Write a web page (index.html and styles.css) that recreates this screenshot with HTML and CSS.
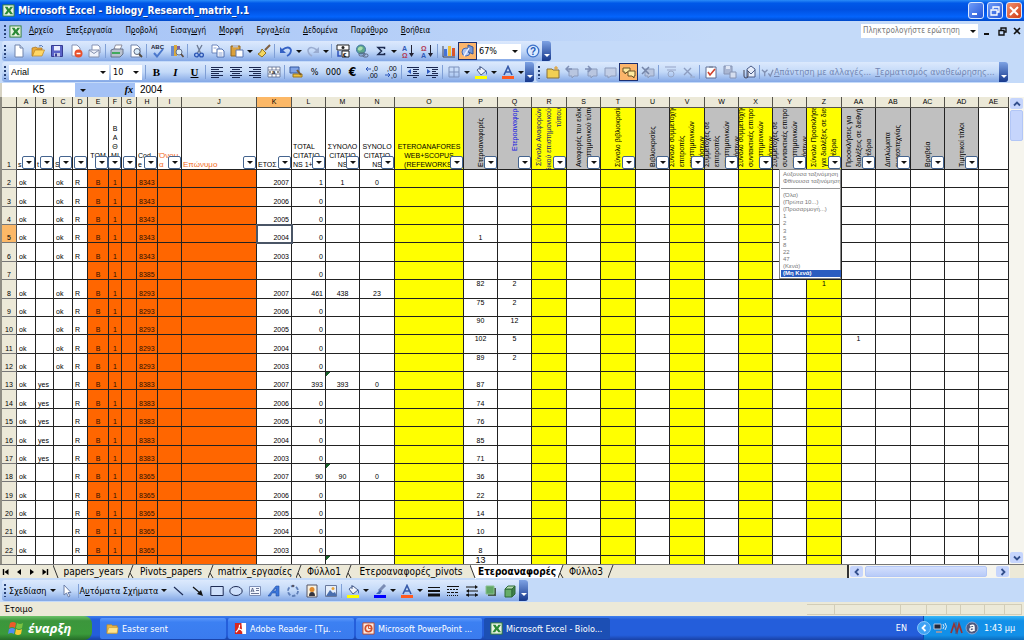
FILE: index.html
```html
<!DOCTYPE html>
<html lang="el">
<head>
<meta charset="utf-8">
<title>Microsoft Excel - Biology_Research_matrix_I.1</title>
<link rel="stylesheet" href="styles.css">
</head>
<body>
<svg class="sprite" aria-hidden="true">
  <symbol id="excel" viewBox="0 0 14 14"><rect x="1" y="1" width="12" height="12" fill="#e8f3e2" stroke="#2c7a34"/><path d="M3 3h3l1.500 2.500L9 3h3L9 7l3 4H9L7.200 8.500 5.500 11H2.500l3-4z" fill="#2b8a36"/></symbol>
  <symbol id="new" viewBox="0 0 14 14"><path d="M3 1h5l3 3v9H3z" fill="#fff" stroke="#7084ac"/><path d="M8 1v3h3" fill="#d4def0" stroke="#7084ac"/></symbol>
  <symbol id="open" viewBox="0 0 14 14"><path d="M1 4l4-1 1 1h5v2H5l-3 6H1z" fill="#e9a93a" stroke="#a8731d" stroke-width=".7"/><path d="M4 6h9.500L11 12H1.500z" fill="#ffd766" stroke="#b98522" stroke-width=".7"/><path d="M8 2q3-1.500 4 1" fill="none" stroke="#4a6fae"/></symbol>
  <symbol id="folderopen" viewBox="0 0 14 14"><path d="M1 3h5l1 1h5v8H1z" fill="#e9b648" stroke="#b98522" stroke-width=".7"/><path d="M3 6h10l-1 6H1z" fill="#ffe48c" stroke="#c79a35" stroke-width=".7"/></symbol>
  <symbol id="save" viewBox="0 0 14 14"><path d="M1.500 1.500h11v11h-11z" fill="#5a63c8" stroke="#363c94"/><path d="M4 2h6v4.500H4z" fill="#e9ecff"/><path d="M4 9h6v3.500H4z" fill="#c5cbe8"/><path d="M5 9.500h2v3H5z" fill="#363c94"/></symbol>
  <symbol id="perm" viewBox="0 0 14 14"><path d="M3 1h5l3 3v8H3z" fill="#fff" stroke="#8593b5"/><circle cx="9.500" cy="9.500" r="4" fill="#e8502c"/><path d="M7.500 9.500h4" stroke="#fff" stroke-width="1.500"/></symbol>
  <symbol id="mail" viewBox="0 0 14 14"><path d="M4 1h6l2 2v6H4z" fill="#fff" stroke="#8793b4"/><path d="M1 6h10v7H1z" fill="#eef1fa" stroke="#8490ae"/><path d="M1 6l5 3.500L11 6" fill="none" stroke="#8490ae"/></symbol>
  <symbol id="print" viewBox="0 0 14 14"><path d="M4 5l1.500-4H12l-2 5z" fill="#fff" stroke="#778" stroke-width=".8"/><path d="M1 6l3-1h9v5l-3 3H1z" fill="#b9c2cf" stroke="#566179" stroke-width=".8"/><path d="M2 8h8v2H2z" fill="#41a95c"/></symbol>
  <symbol id="preview" viewBox="0 0 14 14"><path d="M2 1h6l3 3v9H2z" fill="#fff" stroke="#7084ac"/><circle cx="8" cy="7.500" r="3" fill="#d9ecfb" stroke="#5c6880"/><path d="M10 10l3 3" stroke="#54493c" stroke-width="1.800"/></symbol>
  <symbol id="spell" viewBox="0 0 14 14"><text x="0" y="5" font-size="6" font-weight="bold" fill="#223">ABC</text><path d="M3 9l3 3.500L12 5" fill="none" stroke="#4b78cc" stroke-width="2"/></symbol>
  <symbol id="research" viewBox="0 0 14 14"><path d="M1 2h3v10H1z" fill="#6a8ad0"/><path d="M4 1h3v11H4z" fill="#d9a93d"/><path d="M7 2h3v7H7z" fill="#7d61a8"/><circle cx="9" cy="8" r="3" fill="#dcecfb" stroke="#65728c"/><path d="M11 10l2.500 3" stroke="#5c4a3a" stroke-width="1.600"/></symbol>
  <symbol id="cut" viewBox="0 0 14 14"><path d="M5 1l3.500 8M10 1L5.500 9" stroke="#6c7a94" stroke-width="1.300"/><circle cx="4.500" cy="11" r="1.900" fill="none" stroke="#2b55b4" stroke-width="1.300"/><circle cx="9.500" cy="11" r="1.900" fill="none" stroke="#2b55b4" stroke-width="1.300"/></symbol>
  <symbol id="copy" viewBox="0 0 14 14"><path d="M1 1h5l2 2v6H1z" fill="#fff" stroke="#6c86bd"/><path d="M6 5h5l2 2v6H6z" fill="#fff" stroke="#5070b0"/><path d="M7.500 9h4M7.500 11h4M2.500 4h3" stroke="#8aa3d6"/></symbol>
  <symbol id="paste" viewBox="0 0 14 14"><path d="M1 2h9v10H1z" fill="#dba13b" stroke="#8f6620"/><path d="M3 1h5v2.500H3z" fill="#b9bdc8"/><path d="M6 6h7v7H6z" fill="#fff" stroke="#5d78b4"/></symbol>
  <symbol id="brush" viewBox="0 0 14 14"><path d="M13 1L8 6" stroke="#806040" stroke-width="2"/><path d="M5 5l4 4-4 4-4-3q3-1 4-5z" fill="#f5d75f" stroke="#94731f"/></symbol>
  <symbol id="undo" viewBox="0 0 14 14"><path d="M3 6q7-5 9 0 0 4-4 6" fill="none" stroke="#3461c4" stroke-width="1.800"/><path d="M1 3v6h6z" fill="#3461c4"/></symbol>
  <symbol id="redo" viewBox="0 0 14 14"><path d="M11 6Q4 1 2 6q0 4 4 6" fill="none" stroke="#9aacd0" stroke-width="1.600"/><path d="M13 3v6H7z" fill="#9aacd0"/></symbol>
  <symbol id="euroconv" viewBox="0 0 14 14"><path d="M1 1h12v5H1z" fill="#fff" stroke="#222"/><circle cx="7" cy="3.500" r="1.500" fill="#222"/><path d="M6 7h7v6H6z" fill="#fff" stroke="#222"/><text x="7" y="12.500" font-size="6" font-weight="bold">€</text><path d="M2 7v5h3" fill="none" stroke="#2c50ba" stroke-width="1.500"/></symbol>
  <symbol id="link" viewBox="0 0 14 14"><circle cx="6" cy="5.500" r="4.500" fill="#5ea68d" stroke="#3f73a5"/><path d="M3 4q3-3 5 0-2 4-5 2z" fill="#a6dfad"/><rect x="4" y="9" width="6" height="3" rx="1.500" fill="none" stroke="#55637e"/><rect x="8" y="10" width="5" height="3" rx="1.500" fill="none" stroke="#55637e"/></symbol>
  <symbol id="sigma" viewBox="0 0 14 14"><path d="M10.500 5V3.500H4L7.500 7 4 10.500h6.500V9" fill="none" stroke="#1d2b4f" stroke-width="1.500"/></symbol>
  <symbol id="sorta" viewBox="0 0 14 14"><text x="1" y="6.500" font-size="7" font-weight="bold" fill="#3159b8">A</text><text x="1" y="13.500" font-size="7" font-weight="bold" fill="#b43b54">Ω</text><path d="M10.500 1v10" stroke="#223"/><path d="M8 9h5l-2.500 4z" fill="#223"/></symbol>
  <symbol id="sortd" viewBox="0 0 14 14"><text x="1" y="6.500" font-size="7" font-weight="bold" fill="#b43b54">Ω</text><text x="1" y="13.500" font-size="7" font-weight="bold" fill="#3159b8">A</text><path d="M10.500 1v10" stroke="#223"/><path d="M8 9h5l-2.500 4z" fill="#223"/></symbol>
  <symbol id="chart" viewBox="0 0 14 14"><path d="M1 2v11h12" fill="none" stroke="#445"/><path d="M2 5h3v7H2z" fill="#4672d4"/><path d="M6 2h3v10H6z" fill="#f0c237"/><path d="M10 4h3v8h-3z" fill="#d9552c"/></symbol>
  <symbol id="shapes" viewBox="0 0 14 14"><circle cx="5" cy="8" r="4" fill="#aac4f2" stroke="#4468b0"/><path d="M7 1l5 2v7l-5-2z" fill="#7596d6" stroke="#35589f"/><path d="M3 12L8 4" stroke="#eef" stroke-width="1.500"/></symbol>
  <symbol id="help" viewBox="0 0 14 14"><circle cx="7" cy="7" r="5.800" fill="#dcebff" stroke="#3d71c9" stroke-width="1.300"/><text x="4" y="10.500" font-size="10" font-weight="bold" fill="#2458b8">?</text></symbol>
  <symbol id="left" viewBox="0 0 14 14"><path d="M1 2.500h12M1 4.500h8M1 6.500h12M1 8.500h8M1 10.500h12M1 12.500h8" stroke="#1b2850"/></symbol>
  <symbol id="center" viewBox="0 0 14 14"><path d="M1 2.500h12M3 4.500h8M1 6.500h12M3 8.500h8M1 10.500h12M3 12.500h8" stroke="#1b2850"/></symbol>
  <symbol id="right" viewBox="0 0 14 14"><path d="M1 2.500h12M5 4.500h8M1 6.500h12M5 8.500h8M1 10.500h12M5 12.500h8" stroke="#1b2850"/></symbol>
  <symbol id="merge" viewBox="0 0 14 14"><path d="M1 2h12v10H1zM1 5h12M1 9h12M5 2v3M9 2v3M5 9v3M9 9v3" fill="#fff" stroke="#5a6a8e" stroke-width=".8"/><text x="5" y="9" font-size="6" font-weight="bold" fill="#222">a</text><path d="M2 7h2M10 7h2" stroke="#222"/></symbol>
  <symbol id="money" viewBox="0 0 14 14"><path d="M1 2h9v6H1z" fill="#7fa3e6" stroke="#35589f"/><path d="M4 9h9v3H4z" fill="#efc23c" stroke="#9a7420"/><path d="M8 5l4 5" stroke="#7a5a2b" stroke-width="2"/></symbol>
  <symbol id="decinc" viewBox="0 0 14 14"><text x="7" y="6" font-size="7">,0</text><text x="3" y="13" font-size="7">,00</text><path d="M1 4h5M3 2L1 4l2 2" fill="none" stroke="#2c56ba"/></symbol>
  <symbol id="decdec" viewBox="0 0 14 14"><text x="3" y="6" font-size="7">,00</text><text x="7" y="13" font-size="7">,0</text><path d="M1 10h5M4 8l2 2-2 2" fill="none" stroke="#2c56ba"/></symbol>
  <symbol id="outdent" viewBox="0 0 14 14"><path d="M1 2.500h12M7 4.500h6M7 6.500h4M7 8.500h6M1 10.500h12M7 12.500h4" stroke="#1b2850"/><path d="M5 4v5L1.500 6.500z" fill="#2f5ac0"/></symbol>
  <symbol id="indent" viewBox="0 0 14 14"><path d="M1 2.500h12M7 4.500h6M7 6.500h4M7 8.500h6M1 10.500h12M7 12.500h4" stroke="#1b2850"/><path d="M2 4v5l3.500-2.500z" fill="#2f5ac0"/></symbol>
  <symbol id="borders" viewBox="0 0 14 14"><path d="M2 2h10v10H2zM7 2v10M2 7h10" fill="none" stroke="#7d92bd"/></symbol>
  <symbol id="fill" viewBox="0 0 14 14"><path d="M3 5l4-3 5 4-5 4z" fill="#eef3fc" stroke="#4a5f8c"/><path d="M6 5V1" stroke="#4a5f8c"/><path d="M12 5q2 3 0 5z" fill="#3a63b8"/><path d="M1 11h12v3H1z" fill="#ff0"/></symbol>
  <symbol id="linecolor" viewBox="0 0 14 14"><path d="M12 1L6 7" stroke="#7a8cb4" stroke-width="3"/><path d="M7 6L3 10h4l2-3z" fill="#3f66b6"/><path d="M1 11h12v3H1z" fill="#00f"/></symbol>
  <symbol id="fontcolor" viewBox="0 0 14 14"><path d="M3 10L7 1.500 11 10M4.500 7h5" fill="none" stroke="#3559a8" stroke-width="1.600"/><path d="M1 11h12v3H1z" fill="#ff5a1f"/></symbol>
  <symbol id="folder" viewBox="0 0 14 14"><path d="M1 4h5l1 1h6v8H1z" fill="#f1cf52" stroke="#86703a"/><path d="M10 1v4M8 3h4" stroke="#e49b1d"/></symbol>
  <symbol id="noteprev" viewBox="0 0 14 14"><path d="M4 4h9v7H9l-2 2v-2H4z" fill="#b9c6e0" stroke="#8c9cbd"/><path d="M1 4h6M4 1L1 4l3 3" fill="none" stroke="#7f90b6" stroke-width="1.500"/></symbol>
  <symbol id="notenext" viewBox="0 0 14 14"><path d="M4 4h9v7H9l-2 2v-2H4z" fill="#b9c6e0" stroke="#8c9cbd"/><path d="M1 4h6M4 1l3 3-3 3" fill="none" stroke="#7f90b6" stroke-width="1.500"/></symbol>
  <symbol id="note" viewBox="0 0 14 14"><path d="M2 3h11v8H8l-3 2v-2H2z" fill="#c2cee6" stroke="#8c9cbd"/></symbol>
  <symbol id="notes" viewBox="0 0 14 14"><path d="M1 3h7v4H5L3 9V7H1z" fill="#ffeaa0" stroke="#6a5428"/><path d="M6 6h7v5h-1v2l-2-2H6z" fill="#ffeaa0" stroke="#6a5428"/></symbol>
  <symbol id="notedel" viewBox="0 0 14 14"><path d="M4 4h9v7H9l-2 2v-2H4z" fill="#b9c6e0" stroke="#8c9cbd"/><path d="M1 2l7 7M8 2L1 9" stroke="#7585a8" stroke-width="1.500"/></symbol>
  <symbol id="inkoff" viewBox="0 0 14 14"><path d="M2 2h11M4 5h9" stroke="#a9b8d8" stroke-width="1.500"/><circle cx="8" cy="9" r="3" fill="none" stroke="#98a7c6"/></symbol>
  <symbol id="inkdel" viewBox="0 0 14 14"><path d="M2 3l8 8M9 3l-7 7" stroke="#8d9dc0" stroke-width="1.400"/><path d="M8 12h5" stroke="#98a7c6"/></symbol>
  <symbol id="task" viewBox="0 0 14 14"><path d="M2 2h10v11H2z" fill="#fff" stroke="#5f6f94"/><path d="M5 1h4v2H5z" fill="#8893ab"/><path d="M4 7l2 3 5-6" fill="none" stroke="#d0402c" stroke-width="1.600"/></symbol>
  <symbol id="savegrey" viewBox="0 0 14 14"><path d="M1 1h8v8H1z" fill="#a9b6d2" stroke="#8694b4"/><path d="M3 1h4v3H3z" fill="#dfe6f5"/><path d="M7 7h6v6H7z" fill="#d5deef" stroke="#8694b4"/></symbol>
  <symbol id="attach" viewBox="0 0 14 14"><path d="M5 4l4-3 4 3v8H5z" fill="#e5ecfa" stroke="#4a5c88"/><path d="M5 5l4 4 4-4" fill="none" stroke="#4a5c88"/><path d="M2 5v6q0 2 2 2t2-2V6" fill="none" stroke="#445"/></symbol>
  <symbol id="reply" viewBox="0 0 14 14"><path d="M1 4l3 3 3-3M4 7v4M8 8l2 3 3-7" fill="none" stroke="#8291b4" stroke-width="1.400"/></symbol>
  <symbol id="pointer" viewBox="0 0 14 14"><path d="M4 1v10l2.500-2 2 4 1.500-1-2-3.500h3z" fill="#fff" stroke="#6b7ea8"/></symbol>
  <symbol id="line" viewBox="0 0 14 14"><path d="M2 3l9 8" stroke="#1d2b55" stroke-width="1.200"/></symbol>
  <symbol id="arrow" viewBox="0 0 14 14"><path d="M2 3l7 6" stroke="#111" stroke-width="1.200"/><path d="M12 12l-6-2 4-4z" fill="#111"/></symbol>
  <symbol id="rect" viewBox="0 0 14 14"><path d="M.8 2.500h12.400v9H.8z" fill="#cfe0fb" stroke="#1d2b55"/></symbol>
  <symbol id="oval" viewBox="0 0 14 14"><ellipse cx="7" cy="7" rx="6.200" ry="4.500" fill="#cfe0fb" stroke="#1d2b55"/></symbol>
  <symbol id="textbox" viewBox="0 0 14 14"><path d="M1.500 2.500h11v9h-11z" fill="#f2f6ff" stroke="#7c8fb8"/><path d="M3 8l1.500-4L6 8M3.500 7h2M8 4.500h3M8 6.500h3M3 9.500h8" fill="none" stroke="#48557a" stroke-width=".8"/></symbol>
  <symbol id="wordart" viewBox="0 0 14 14"><path d="M1 12L9 2h3v10H9V9H5l-1.500 3zM6.500 7H9V4z" fill="#3b76dc" stroke="#2450a4" stroke-width=".6"/></symbol>
  <symbol id="diagram" viewBox="0 0 14 14"><circle cx="7" cy="7" r="5" fill="none" stroke="#5f7fb8" stroke-width="1.800" stroke-dasharray="3.500 1.700"/><circle cx="7" cy="2" r="1.300" fill="#556"/></symbol>
  <symbol id="clipart" viewBox="0 0 14 14"><path d="M2 1h10v12H2z" fill="#f7f0e0" stroke="#556"/><circle cx="7" cy="5.500" r="2.500" fill="#e08a2c"/><path d="M4 12q0-4 3-4t3 4z" fill="#34343f"/></symbol>
  <symbol id="picture" viewBox="0 0 14 14"><path d="M1.500 1.500h11v11h-11z" fill="#e5eefb" stroke="#68789c"/><circle cx="9" cy="4.500" r="1.500" fill="#e6a33b"/><path d="M2 12l4-6 3 3 2-1 2 4z" fill="#4b6fae"/></symbol>
  <symbol id="weight" viewBox="0 0 14 14"><path d="M1 3.500h12" stroke="#111"/><path d="M1 7h12" stroke="#111" stroke-width="2"/><path d="M1 11h12" stroke="#111" stroke-width="3"/></symbol>
  <symbol id="dash" viewBox="0 0 14 14"><path d="M1 2.500h12" stroke="#111"/><path d="M1 5.500h12" stroke="#111" stroke-dasharray="2 1"/><path d="M1 8.500h12" stroke="#111" stroke-dasharray="3 1"/><path d="M1 11.500h12" stroke="#111" stroke-dasharray="1 1"/></symbol>
  <symbol id="arrows" viewBox="0 0 14 14"><path d="M1 3h10M3 7h10M1 11h12" stroke="#111" stroke-width="1.200"/><path d="M10 1l3 2-3 2zM4 5L1 7l3 2zM10 9l3 2-3 2zM4 9l-3 2 3 2z" fill="#111"/></symbol>
  <symbol id="shadow" viewBox="0 0 14 14"><path d="M4 4h8v8H4z" fill="#465a4c"/><path d="M2 2h8v8H2z" fill="#61a766" stroke="#8ac090"/></symbol>
  <symbol id="cube" viewBox="0 0 14 14"><path d="M2 5h7v8H2z" fill="#66ad69" stroke="#2f6a38"/><path d="M2 5l3-3h7L9 5z" fill="#b4dcb0" stroke="#2f6a38"/><path d="M9 5l3-3v8l-3 3z" fill="#40804a" stroke="#2f6a38"/></symbol>
  <symbol id="flag" viewBox="0 0 16 16"><path d="M2 3q3-2 6 0L7 8Q4 6 1 8z" fill="#ee5a2a"/><path d="M9 3q3 2 6 0l-1 5q-3 2-6 0z" fill="#7cc242"/><path d="M1 9q3-2 6 0l-1 5q-3-2-6 0z" fill="#4f8df0"/><path d="M8 9q3 2 6 0l-1 5q-3 2-6 0z" fill="#fbc92f"/></symbol>
  <symbol id="pdf" viewBox="0 0 14 14"><path d="M1 1h12v12H1z" fill="#d8261c"/><path d="M8 1h5v12H9z" fill="#fff"/><path d="M2 11q4-3 4-8M4 8q4-1 5 2" fill="none" stroke="#fff" stroke-width="1.300"/></symbol>
  <symbol id="ppt" viewBox="0 0 14 14"><path d="M1 1h12v12H1z" fill="#fbe9df" stroke="#c0482a"/><circle cx="7" cy="7" r="3.500" fill="none" stroke="#d2502c" stroke-width="1.800"/><path d="M7 3v4h4" stroke="#d2502c" fill="none"/></symbol>
</svg>

<div class="app">
<header class="titlebar">
  <svg class="icon"><use href="#excel"/></svg>
  <h1>Microsoft Excel - Biology_Research_matrix_I.1</h1>
  <div class="winbtns">
    <button aria-label="Ελαχιστοποίηση"><svg viewBox="0 0 14 14"><path d="M3 10h5" stroke="#fff" stroke-width="2"/></svg></button>
    <button aria-label="Επαναφορά"><svg viewBox="0 0 14 14"><path d="M5 5V3h6v5H9M3 6h6v5H3z" fill="none" stroke="#fff" stroke-width="1.300"/></svg></button>
    <button class="close" aria-label="Κλείσιμο"><svg viewBox="0 0 14 14"><path d="M3 3l8 8M11 3l-8 8" stroke="#fff" stroke-width="2"/></svg></button>
  </div>
</header>

<nav class="menubar">
  <i class="grip"></i>
  <svg class="icon"><use href="#excel"/></svg>
  <button><u>Α</u>ρχείο</button><button><u>Ε</u>πεξεργασία</button><button>Π<u>ρ</u>οβολή</button><button>Εισαγ<u>ω</u>γή</button><button><u>Μ</u>ορφή</button><button>Εργα<u>λ</u>εία</button><button><u>Δ</u>εδομένα</button><button>Παρά<u>θ</u>υρο</button><button><u>Β</u>οήθεια</button>
  <span class="ask"><input aria-label="Ερώτηση" placeholder="Πληκτρολογήστε ερώτηση"><b class="tri"></b></span>
  <div class="docbtns">
    <button aria-label="Ελαχιστοποίηση βιβλίου"><svg viewBox="0 0 10 10"><path d="M2 8h5" stroke="#111" stroke-width="2"/></svg></button>
    <button aria-label="Επαναφορά βιβλίου"><svg viewBox="0 0 10 10"><path d="M4 4V2h5v4H7M2 4.500h5V9H2z" fill="none" stroke="#111" stroke-width="1.400"/></svg></button>
    <button aria-label="Κλείσιμο βιβλίου"><svg viewBox="0 0 10 10"><path d="M2 2l6 6M8 2L2 8" stroke="#111" stroke-width="1.600"/></svg></button>
  </div>
</nav>

<div class="row">
  <div class="toolbar" data-icons="new open save perm mail | print preview | spell research | cut copy paste v brush | undo v redo v | euroconv link sigma v sorta sortd | chart shapes*">
    <span class="combo zoom"><input aria-label="Ζουμ" value="67%"><b class="tri"></b></span>
    <button class="tool" aria-label="help"><svg><use href="#help"/></svg></button>
    <i class="cap"></i>
  </div>
</div>

<div class="row">
  <div class="toolbar">
    <i class="grip"></i>
    <span class="combo fontname"><input aria-label="Γραμματοσειρά" value="Arial"><b class="tri"></b></span>
    <span class="combo fontsize"><input aria-label="Μέγεθος" value="10"><b class="tri"></b></span>
    <i class="sep"></i>
    <button class="tool glyph">B</button><button class="tool glyph italic">I</button><button class="tool glyph under">U</button>
    <i class="sep"></i>
    <span class="tools" data-icons="left center right merge | money"></span>
    <button class="tool num">%</button><button class="tool num">000</button><button class="tool num euro">€</button>
    <span class="tools" data-icons="decinc decdec | outdent indent | borders v fill v fontcolor v"></span>
    <i class="cap"></i>
  </div>
  <div class="toolbar" data-icons="folder noteprev notenext note notes* notedel | inkoff inkdel | task savegrey attach |">
    <button class="review" disabled><svg class="icon"><use href="#reply"/></svg><span><u>Α</u>πάντηση με αλλαγές...</span></button>
    <button class="review" disabled><span><u>Τ</u>ερματισμός αναθεώρησης...</span></button>
    <i class="cap"></i>
  </div>
</div>

<div class="formula">
  <input class="namebox" aria-label="Πλαίσιο ονόματος" value="K5">
  <div class="fx"><b class="tri"></b><em>fx</em></div>
  <input class="fvalue" aria-label="Τύπος" value="2004">
</div>

<main class="sheet">
  <div class="grid"><table id="cells"></table></div>
  <div class="vscroll">
    <button aria-label="Πάνω"><svg viewBox="0 0 8 8"><path d="M1 5.500L4 2.500l3 3" fill="none" stroke="#334f8c" stroke-width="1.800"/></svg></button>
    <i class="thumb"></i>
    <button class="last" aria-label="Κάτω"><svg viewBox="0 0 8 8"><path d="M1 2.500l3 3 3-3" fill="none" stroke="#334f8c" stroke-width="1.800"/></svg></button>
  </div>
</main>

<div class="tabs">
  <div class="tabnav">
    <button aria-label="Πρώτο"><svg viewBox="0 0 8 8"><path d="M1.500 1v6" stroke="#000" stroke-width="1.400"/><path d="M6.500 1v6L2.500 4z"/></svg></button>
    <button aria-label="Προηγούμενο"><svg viewBox="0 0 8 8"><path d="M6 1v6L2 4z"/></svg></button>
    <button aria-label="Επόμενο"><svg viewBox="0 0 8 8"><path d="M2 1v6l4-3z"/></svg></button>
    <button aria-label="Τελευταίο"><svg viewBox="0 0 8 8"><path d="M6.500 1v6" stroke="#000" stroke-width="1.400"/><path d="M1.500 1v6l4-3z"/></svg></button>
  </div>
  <svg class="slash" viewBox="0 0 6 14"><path d="M0 0l5 13" stroke="#333" fill="none"/></svg>
  <button class="t1">papers_years</button>
  <svg class="slash" viewBox="0 0 6 14"><path d="M5 0L0 13M2 8l3 5" stroke="#333" fill="none"/></svg>
  <button class="t2">Pivots_papers</button>
  <svg class="slash" viewBox="0 0 6 14"><path d="M5 0L0 13M2 8l3 5" stroke="#333" fill="none"/></svg>
  <button class="t3">matrix_εργασίες</button>
  <svg class="slash" viewBox="0 0 6 14"><path d="M5 0L0 13M2 8l3 5" stroke="#333" fill="none"/></svg>
  <button class="t4">Φύλλο1</button>
  <svg class="slash" viewBox="0 0 6 14"><path d="M5 0L0 13M2 8l3 5" stroke="#333" fill="none"/></svg>
  <button class="t5">Ετεροαναφορές_pivots</button>
  <svg class="slash" viewBox="0 0 6 14"><path d="M0 0h6v14H5z" fill="#fff"/><path d="M0 0l5 13" stroke="#333" fill="none"/></svg>
  <button class="t6 active">Ετεροαναφορές</button>
  <svg class="slash" viewBox="0 0 6 14"><path d="M0 0h5L0 13z" fill="#fff"/><path d="M5 0L0 13M2 8l3 5" stroke="#333" fill="none"/></svg>
  <button class="t4">Φύλλο3</button>
  <svg class="slash" viewBox="0 0 6 14"><path d="M5 0L0 13" stroke="#333" fill="none"/></svg>
  <div class="hscroll">
    <button aria-label="Αριστερά"><svg viewBox="0 0 8 8"><path d="M5.500 1L2.500 4l3 3" fill="none" stroke="#334f8c" stroke-width="1.800"/></svg></button>
    <i class="thumb"></i>
    <button class="last" aria-label="Δεξιά"><svg viewBox="0 0 8 8"><path d="M2.500 1l3 3-3 3" fill="none" stroke="#334f8c" stroke-width="1.800"/></svg></button>
  </div>
</div>

<div class="row drawing">
  <div class="toolbar">
    <i class="grip"></i>
    <button class="label"><span>Σ<u>χ</u>εδίαση</span><b class="tri"></b></button>
    <span class="tools" data-icons="pointer |"></span>
    <button class="label"><span>Α<u>υ</u>τόματα Σχήματα</span><b class="tri"></b></button>
    <span class="tools" data-icons="line arrow rect oval textbox wordart diagram clipart picture | fill v linecolor v fontcolor v weight dash arrows shadow cube"></span>
    <i class="cap"></i>
  </div>
</div>

<div class="status"><span>Έτοιμο</span><i class="p28"></i><i class="p66"></i><i class="p26"></i><i class="p20"></i><i class="p14"></i><i class="p24"></i><i class="p20"></i><i class="p16"></i></div>

<footer class="taskbar">
  <button class="start"><svg viewBox="0 0 16 16"><use href="#flag"/></svg>έναρξη</button>
  <div class="tasks">
    <button><svg class="icon"><use href="#folderopen"/></svg>Easter sent</button>
    <button><svg class="icon"><use href="#pdf"/></svg>Adobe Reader - [Τμ. ...</button>
    <button><svg class="icon"><use href="#ppt"/></svg>Microsoft PowerPoint ...</button>
    <button class="active"><svg class="icon"><use href="#excel"/></svg>Microsoft Excel - Biolo...</button>
  </div>
  <span class="lang">EN</span>
  <div class="tray">
    <button class="chev" aria-label="Εμφάνιση κρυφών εικονιδίων"><svg viewBox="0 0 14 14"><circle cx="7" cy="7" r="6.500" fill="#3ea2f4" stroke="#9fd6ff" stroke-width=".8"/><path d="M8.500 4L5.500 7l3 3" fill="none" stroke="#fff" stroke-width="1.800"/></svg></button>
    <svg viewBox="0 0 14 14"><path d="M1 3h7v5H1z" fill="#20283c" stroke="#b9c6da"/><path d="M3 10h6v2H3z" fill="#8c97ab"/><path d="M10 3q2 2.500 0 5M12 2q3 3.500 0 7" fill="none" stroke="#d6e8fb"/></svg>
    <svg viewBox="0 0 14 14"><path d="M2 12L5 3l3 8 2-8 3 9" fill="none" stroke="#983434" stroke-width="1.700"/><path d="M7 1v12" stroke="#4a5578"/></svg>
    <svg viewBox="0 0 14 14"><circle cx="7" cy="7" r="6" fill="#4d5a80" stroke="#8ba0cc"/><path d="M5 5q4-2 4 1v4M9 7q-4-1-4 1.500T9 9" fill="none" stroke="#fff" stroke-width="1.500"/></svg>
    <time>1:43 μμ</time>
  </div>
</footer>
</div>
<script src="app.js"></script>
</body>
</html>
```

FILE: styles.css
```css
* { box-sizing: border-box; }
body { margin: 0; font: 9px/12px "DejaVu Sans Condensed", "Noto Sans", sans-serif; color: #000; }
button, input { font: inherit; color: inherit; border: 0; padding: 0; margin: 0; background: none; min-width: 0; }
.sprite { display: none; }
.tool svg { font-family: "Liberation Sans", sans-serif; }
.app { display: flex; flex-direction: column; height: 100vh; overflow: hidden; background: #c4daf9; }
.icon { width: 13px; height: 13px; flex: none; }
.tri { flex: none; width: 0; height: 0; border: 3px solid transparent; border-top-color: #111; border-bottom: 0; }

.titlebar { flex: none; display: flex; align-items: center; gap: 3px; height: 21px; padding: 0 2px; color: #fff;
  background: linear-gradient(#2a8cf8, #0058e8 15%, #0050e0 45%, #0464fc 80%, #0048c8); }
.titlebar h1 { flex: 1; margin: 0; font: bold 10px/14px "DejaVu Sans Condensed", sans-serif; white-space: nowrap; text-shadow: 1px 1px #0a3a9a; }
.winbtns { display: flex; gap: 3px; }
.winbtns button { width: 16px; height: 17px; border: 1px solid #dbe8ff; border-radius: 3px; background: linear-gradient(135deg, #6f9cf8, #2456d8); }
.winbtns .close { background: linear-gradient(135deg, #f09070, #d03c14); }
.winbtns svg { display: block; width: 14px; height: 14px; }

.menubar { flex: none; display: flex; align-items: center; height: 20px; padding: 0 1px 0 4px; background: linear-gradient(90deg, #a4c2f6, #c4daf9 70%); white-space: nowrap; font-size: 8px; }
.menubar .icon { margin-right: 1px; }
.menubar button { padding: 0 7px 0 6px; }
.grip { flex: none; width: 2px; height: 13px; margin-right: 3px; background: repeating-linear-gradient(#274176 0 2px, transparent 2px 4px); }
.ask { display: flex; align-items: center; width: 117px; height: 14px; margin-left: auto; background: #fff; }
.ask input { flex: 1; padding-left: 2px; }
.ask input::placeholder { color: #777; opacity: 1; }
.ask .tri { margin: 0 2px; }
.menubar .docbtns { display: flex; gap: 4px; padding-left: 4px; }
.menubar .docbtns button { width: 11px; height: 10px; padding: 0; }
.docbtns svg { display: block; width: 10px; height: 10px; }

.row { flex: none; display: flex; gap: 2px; height: 21px; padding: 0 0 1px 2px; white-space: nowrap; }
.toolbar { display: flex; align-items: center; padding-left: 2px; border-radius: 3px; background: linear-gradient(#dce9fd, #c3d9f8 50%, #84a8e6); }
.tools { display: flex; align-items: center; }
.tool { flex: none; display: grid; place-items: center; width: 19px; height: 18px; }
.tool svg { width: 14px; height: 14px; }
.tool.on { border: 1px solid #1c2f70; background: #fcb56b; }
.drop { width: 8px; height: 18px; display: grid; place-items: center; }
.sep { flex: none; width: 1px; height: 14px; margin: 0 1px; background: #7f9fd6; }
.glyph { font: bold 11px/14px "Liberation Serif", serif; }
.italic { font-style: italic; }
.under { text-decoration: underline; }
.num { font-size: 9px; }
.euro { font-size: 12px; font-weight: bold; }
.combo { display: flex; align-items: center; height: 15px; background: #fff; }
.combo input { flex: 1; padding-left: 2px; }
.combo .tri { margin: 0 3px; }
.zoom { width: 44px; margin-right: 2px; }
.fontname { width: 100px; margin-right: 2px; font-family: "Liberation Sans", sans-serif; }
.fontsize { width: 31px; margin-right: 2px; }
.cap { align-self: stretch; width: 9px; border-radius: 0 3px 3px 0; background: linear-gradient(#7da2e4, #16388c); }
.cap::after { content: ""; display: block; margin: 13px 2px 0; border: 3px solid transparent; border-top-color: #fff; border-bottom: 0; width: 0; }
.review { display: flex; align-items: center; margin-right: 4px; color: #7488b4; }

.formula { flex: none; display: flex; height: 14px; padding-left: 2px; background: #d6d2c2; font: 10px/14px "Liberation Sans", sans-serif; }
.namebox { width: 73px; background: #fff; text-align: center; }
.fx { display: flex; align-items: center; justify-content: space-between; width: 60px; padding: 0 2px 0 5px; background: #a4c2f6; }
.fx em { font: italic bold 10px/12px "Liberation Serif", serif; }
.fvalue { flex: 1; padding-left: 5px; background: #fff; }

.sheet { flex: 1; display: flex; min-height: 0; padding-left: 2px; background: #908e84; }
.grid { flex: 1; min-width: 0; overflow: hidden; background: #fff; }
table { width: 100%; table-layout: fixed; border-collapse: separate; border-spacing: 0; font: 7px/8px "Liberation Sans", sans-serif; }
th, td { padding: 0 2px; font-weight: normal; vertical-align: bottom; text-align: left; border-right: 1px solid #222; border-bottom: 1px solid #222; white-space: nowrap; overflow: hidden; }
tr { height: 18px; }
tbody tr:nth-child(8n+2), tbody tr:nth-child(8n+5), tbody tr:nth-child(8n+7) { height: 19px; }
.letters { height: 11px; }
.letters th { background: #ece9d8; border-color: #55534c; text-align: center; vertical-align: middle; padding: 0; }
.rownum { background: #ece9d8; border-color: #777 #555; text-align: center; padding: 0; }
.letters .cur, .rownum.cur { background: #fcb867; }
.heads { height: 62px; }
.heads .head { position: relative; overflow: visible; padding: 0; }
.caption { display: flex; flex-direction: column; justify-content: flex-end; height: 61px; overflow: hidden; padding: 0 1px; line-height: 9px; }
.caption.mid { text-align: center; align-items: center; }
.caption.vert { writing-mode: vertical-rl; transform: rotate(180deg); justify-content: center; width: 100%; padding: 2px 0 0; line-height: 10px; }
.caption.raised { padding-top: 18px; }
.caption.end { align-items: flex-end; }
.filter { position: absolute; right: 0; bottom: 0; width: 13px; height: 13px; display: grid; place-items: center; background: #fff; border: 1px solid #44648f; border-radius: 2px; }
.orange { background: #f60; color: #2c1000; }
.yellow { background: #ff0; }
.grey { background: #c0c0c0; }
.ink-orange { color: #f26a1b; font-size: 8px; }
.ink-blue { color: #1414e0; }
.ink-navy { color: #14147a; }
.num-r { text-align: right; }
.num-c { text-align: center; }
.top { vertical-align: top; }
.last-row { font-size: 9px; }
.sel { outline: 2px solid #4a5566; outline-offset: -1px; }
.flagged { background-image: linear-gradient(135deg, #17602a 3px, transparent 3px); }
.options { position: absolute; z-index: 2; top: 100%; left: 6px; width: 62px; height: 110px; margin: 0; padding: 1px; display: grid; grid-auto-rows: 1fr; list-style: none; background: #fff; border: 1px solid #888; color: #777; font: 6px/7px "Liberation Sans", sans-serif; }
.options li { padding-left: 2px; }
.options .rule { border-top: 1px solid #999; align-self: center; height: 0; }
.options .picked { background: #2a5cc0; color: #fff; font-weight: bold; }

.vscroll { display: flex; flex-direction: column; width: 15px; background: #f6f5ee; }
.vscroll button, .hscroll button { display: grid; place-items: center; width: 13px; height: 11px; margin: 1px; border-radius: 2px; background: #c6d5fc; }
.vscroll svg, .hscroll svg { width: 8px; height: 8px; }
.vscroll .thumb { height: 31px; margin: 0 1px; border: 1px solid #b2c6f6; border-radius: 2px; background: #c6d5fc; }
.vscroll .last { margin-top: auto; }

.tabs { flex: none; display: flex; align-items: center; height: 14px; padding-left: 1px; background: #ece9d8; white-space: nowrap; border-top: 1px solid #777; }
.tabnav { display: flex; gap: 5px; padding: 0 4px 0 1px; }
.tabnav button { width: 8px; height: 8px; }
.tabnav svg { display: block; width: 8px; height: 8px; }
.slash { flex: none; width: 6px; height: 14px; }
.t1, .t2, .t3, .t4, .t5, .t6 { flex: none; height: 13px; font-size: 10px; text-align: center; }
.t1 { width: 69px; }
.t2 { width: 74px; }
.t3 { width: 82px; }
.t4 { width: 44px; }
.t5 { width: 118px; }
.t6 { width: 82px; }
.tabs .active { background: #fff; font-weight: bold; }
.hscroll { display: flex; align-items: center; width: 163px; height: 13px; margin: 0 14px 0 auto; border-left: 2px solid #333; background: #f6f5ee; }
.hscroll .thumb { flex: 1; height: 11px; margin: 0 8px 0 1px; border: 1px solid #b2c6f6; border-radius: 2px; background: linear-gradient(#d3dffd, #b8cbf8); }
.hscroll .last { margin: 1px; }

.drawing { height: 24px; padding: 2px 0 1px 2px; }
.label { display: flex; align-items: center; gap: 3px; margin-right: 2px; }
.status { flex: none; display: flex; align-items: center; height: 14px; padding: 0 2px 0 4px; background: #ece9d8; }
.status span { flex: 1; }
.status i { height: 11px; border: 1px solid #d2cdb8; border-left: 0; }
.p14 { width: 14px; } .p16 { width: 17px; } .p20 { width: 20px; } .p24 { width: 24px; } .p26 { width: 26px; } .p28 { width: 28px; } .p66 { width: 66px; }

.taskbar { flex: none; display: flex; align-items: stretch; height: 24px; color: #fff; white-space: nowrap; background: linear-gradient(#3f80ee, #245edb 15%, #245edb 80%, #1941a5); }
.start { display: flex; align-items: center; gap: 4px; width: 92px; padding-left: 8px; border-radius: 0 8px 8px 0; font: italic bold 13px/20px "Open Sans", sans-serif; background: linear-gradient(#6cc26a, #3c963c 20%, #3a9a3a 75%, #256b28); }
.start svg { width: 16px; height: 16px; }
.tasks { flex: 1; display: flex; gap: 2px; padding: 2px 0 1px 8px; min-width: 0; }
.tasks button { display: flex; align-items: center; gap: 3px; flex: 0 1 126px; padding-left: 6px; overflow: hidden; border-radius: 2px; background: linear-gradient(#5c98fb, #3c80f2 20%, #3a7bee); }
.tasks .active { background: #1c4fb4; }
.lang { align-self: center; padding-right: 16px; }
.tray { display: flex; align-items: center; gap: 2px; width: 101px; border-left: 1px solid #0c4bb0; background: linear-gradient(#3ab8f8, #1290e8 20%, #1290e8 80%, #0c6cbc); }
.tray svg { display: block; width: 14px; height: 14px; }
.chev { margin-left: -7px; }
.tray time { margin-left: 3px; }
```

FILE: app.js
```js
// Toolbars: each data-icons list is expanded to buttons, separators and drop arrows.
document.querySelectorAll('[data-icons]').forEach(bar => {
  let html = bar.classList.contains('toolbar') ? '<i class="grip"></i>' : '';
  for (const name of bar.dataset.icons.split(' ')) {
    if (name === '|') html += '<i class="sep"></i>';
    else if (name === 'v') html += '<button class="drop" aria-label="menu"><b class="tri"></b></button>';
    else {
      const id = name.replace('*', '');
      html += `<button class="tool${id !== name ? ' on' : ''}" aria-label="${id}"><svg><use href="#${id}"/></svg></button>`;
    }
  }
  bar.insertAdjacentHTML('afterbegin', html);
});

// Columns: letter, width, heading lines, heading classes, body class.
const V = 'vert';
const columns = [
  ['A', 19, ['s']], ['B', 18, ['t']], ['C', 19, ['S']], ['D', 15, []],
  ['E', 21, ['TOM', 'E'], 'mid', 'orange'], ['F', 13, ['B', 'A', 'Θ', 'MI', 'Δ'], 'mid', 'orange'],
  ['G', 15, [], '', 'orange'], ['H', 21, ['Cod', 'e'], '', 'orange'],
  ['I', 24, ['Όνομ', 'α'], 'ink-orange', 'orange'], ['J', 75, ['Επώνυμο'], 'ink-orange', 'orange'],
  ['K', 35, ['ΕΤΟΣ']], ['L', 34, ['TOTAL', 'CITATIO', 'NS 1+2']],
  ['M', 34, ['ΣΥΝΟΛΟ', 'CITATIO', 'NS'], 'mid'], ['N', 35, ['SYNOLO', 'CITATIO', 'NS'], 'mid'],
  ['O', 69, ['ETEROANAFORES', 'WEB+SCOPUS', '(REFEWORKS)'], 'mid', 'yellow'],
  ['P', 34, ['Ετεροαναφορές'], V, ''], ['Q', 34, ['Ετεροαναφορές'], V + ' raised ink-blue', ''],
  ['R', 35, ['Σύνολο Αναφορών', 'ειδικού επιστημονικού', 'τύπου'], V + ' end ink-navy', 'yellow'],
  ['S', 34, ['Αναφορές του ειδικού', 'επιστημονικού τύπου'], V, ''],
  ['T', 35, ['Σύνολο βιβλιοκρισίες'], V, 'yellow'], ['U', 34, ['Βιβλιοκρισίες'], V, ''],
  ['V', 35, ['Σύνολο συμμετοχής σε', 'επιτροπές', 'επιστημονικών', 'εκδόσεων'], V, 'yellow'],
  ['W', 34, ['Συμμετοχές σε', 'επιτροπές', 'επιστημονικών', 'εκδόσεων'], V, ''],
  ['X', 34, ['Σύνολο συμμετοχής σε', 'συντακτικές επιτροπές', 'επιστημονικών', 'εκδόσεων'], V, 'yellow'],
  ['Y', 34, ['Συμμετοχές σε', 'συντακτικές επιτροπές', 'επιστημονικών', 'εκδόσεων'], V, ''],
  ['Z', 35, ['Σύνολο Προσκλήσεις', 'για διαλέξεις σε διεθνή', 'συνέδρια'], V, 'yellow'],
  ['AA', 34, ['Προσκλήσεις για', 'διαλέξεις σε διεθνή', 'συνέδρια'], V, ''],
  ['AB', 35, ['Διπλώματα', 'ευρεσιτεχνίας'], V, ''], ['AC', 34, ['Βραβεία'], V, ''],
  ['AD', 34, ['Τιμητικοί τίτλοι'], V, ''], ['AE', 0, null]
];

const years = [2007, 2006, 2005, 2004, 2003];
const codes = [8343, 8293, 8383, 8365];
const L = { 2: 1, 8: 461, 13: 393, 18: 90 };
const M = { 2: 1, 8: 438, 13: 393, 18: 90 };
const N = { 2: 0, 8: 23, 13: 0, 18: 0 };
const P = { 5: 1, 8: 82, 9: 75, 10: 90, 11: 102, 12: 89, 13: 87, 14: 74, 15: 76, 16: 85, 17: 71, 18: 36, 19: 22, 20: 14, 21: 10, 22: 8, 23: 13 };
const Q = { 8: 2, 9: 2, 10: 12, 11: 5, 12: 2 };

function value(col, r) {
  if (r === 23) return col === 'P' ? P[r] : '';
  const i = r < 7 ? r - 2 : r - 3;
  switch (col) {
    case 'A': return r === 7 ? '' : 'ok';
    case 'B': return r >= 13 && r <= 17 ? 'yes' : '';
    case 'C': return r !== 7 && r <= 12 ? 'ok' : '';
    case 'D': return r === 7 ? '' : 'R';
    case 'E': return 'B';
    case 'F': return 1;
    case 'H': return r === 7 ? 8385 : codes[Math.floor(i / 5)];
    case 'K': return r === 7 ? '' : years[i % 5];
    case 'L': return L[r] ?? 0;
    case 'M': return M[r] ?? '';
    case 'N': return N[r] ?? '';
    case 'P': return P[r] ?? '';
    case 'Q': return Q[r] ?? '';
    case 'Z': return r === 8 ? 1 : '';
    case 'AA': return r === 11 ? 1 : '';
  }
  return '';
}

const options = ['Αύξουσα ταξινόμηση', 'Φθίνουσα ταξινόμηση', '-', '(Όλα)', '(Πρώτα 10...)', '(Προσαρμογή...)', '1', '2', '3', '5', '8', '22', '47', '(Κενά)', '(Μη Κενά)'];
const list = '<ul class="options" role="listbox">' + options.map(o =>
  o === '-' ? '<li class="rule" role="separator"></li>'
    : `<li role="option"${o === '(Μη Κενά)' ? ' class="picked" aria-selected="true"' : ''}>${o}</li>`).join('') + '</ul>';

const centred = ['E', 'F', 'M', 'N', 'P', 'Q', 'Z', 'AA'];
const raised = ['P', 'Q', 'Z', 'AA'];

let html = '<colgroup><col style="width:15px">' + columns.map(c => c[1] ? `<col style="width:${c[1]}px">` : '<col>').join('') + '</colgroup>';
html += '<thead><tr class="letters"><th></th>' + columns.map(c => `<th${c[0] === 'K' ? ' class="cur"' : ''}>${c[0]}</th>`).join('') + '</tr><tr class="heads"><th class="rownum">1</th>';
for (const [letter, , lines, look = '', body] of columns) {
  if (!lines) { html += '<th></th>'; continue; }
  const bg = body === 'yellow' ? ' yellow' : look.includes(V) ? ' grey' : '';
  html += `<th class="head${bg}"><div class="caption ${look}">${lines.map(t => `<span>${t}</span>`).join('')}</div>` +
    `<button class="filter" aria-label="Φίλτρο ${letter}"><b class="tri"></b></button>${letter === 'Y' ? list : ''}</th>`;
}
html += '</tr></thead><tbody>';
for (let r = 2; r <= 23; r++) {
  html += `<tr><td class="rownum${r === 5 ? ' cur' : ''}">${r < 23 ? r : ''}</td>`;
  for (const [letter, , , , body = ''] of columns) {
    const cls = [body];
    if (letter === 'K' || letter === 'L') cls.push('num-r');
    if (centred.includes(letter)) cls.push('num-c');
    if (raised.includes(letter) && (r >= 8 && r <= 12 || r === 23)) cls.push('top');
    if (r === 23) cls.push('last-row');
    if (letter === 'K' && r === 5) cls.push('sel');
    if (letter === 'M' && [13, 18, 23].includes(r)) cls.push('flagged');
    html += `<td class="${cls.filter(Boolean).join(' ')}">${value(letter, r)}</td>`;
  }
  html += '</tr>';
}
document.getElementById('cells').innerHTML = html + '</tbody>';
```
